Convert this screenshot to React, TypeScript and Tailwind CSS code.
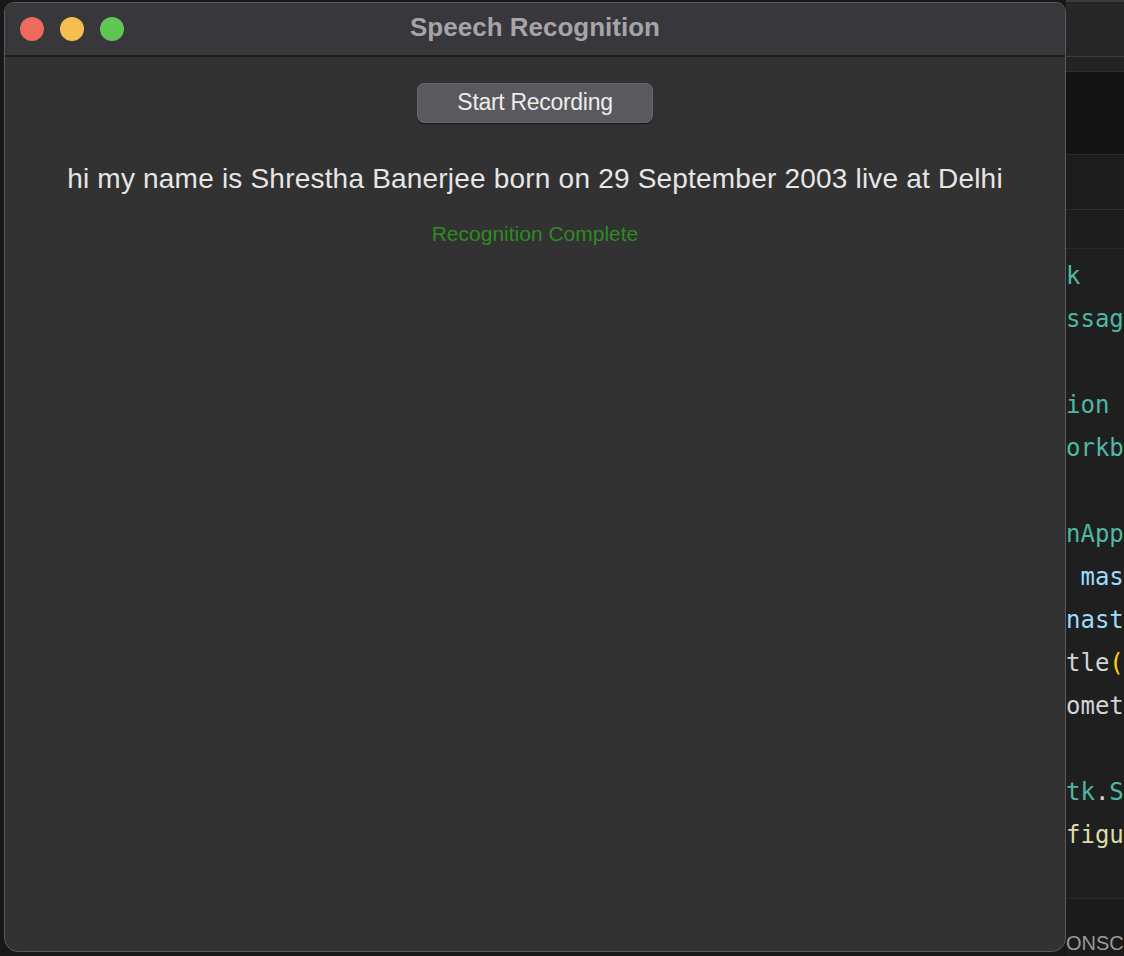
const codeLines: { parts: { text: string; color: string }[] }[] = [
  { parts: [{ text: "k", color: "text-[#4fb8a2]" }] },
  { parts: [{ text: "ssag", color: "text-[#4fb8a2]" }] },
  { parts: [] },
  { parts: [{ text: "ion", color: "text-[#4fb8a2]" }] },
  { parts: [{ text: "orkb", color: "text-[#4fb8a2]" }] },
  { parts: [] },
  { parts: [{ text: "nApp", color: "text-[#4fb8a2]" }] },
  { parts: [{ text: " mas", color: "text-[#9cdcfe]" }] },
  { parts: [{ text: "nast", color: "text-[#9cdcfe]" }] },
  {
    parts: [
      { text: "tle", color: "text-[#d4d4d4]" },
      { text: "(", color: "text-[#ffd700]" },
    ],
  },
  { parts: [{ text: "omet", color: "text-[#d4d4d4]" }] },
  { parts: [] },
  {
    parts: [
      { text: "tk", color: "text-[#4fb8a2]" },
      { text: ".", color: "text-[#d4d4d4]" },
      { text: "S", color: "text-[#4fb8a2]" },
    ],
  },
  { parts: [{ text: "figu", color: "text-[#dcdcaa]" }] },
]

function TrafficLights() {
  return (
    <div className="flex items-center gap-4">
      <span className="w-6 h-6 rounded-full bg-[#ec6a5e]"></span>
      <span className="w-6 h-6 rounded-full bg-[#f4bf4f]"></span>
      <span className="w-6 h-6 rounded-full bg-[#61c554]"></span>
    </div>
  )
}

/**
 * Editor strip that shows behind the app window on the right.
 */
function EditorStrip() {
  return (
    <div className="flex-1 flex flex-col overflow-hidden font-['DejaVu_Sans_Mono',monospace]">
      <div className="h-[2px] bg-[#3a3a3a]"></div>
      <div className="h-[55px] bg-[#262626] border-b border-[#3c3c3c]"></div>
      <div className="h-[15px] bg-[#232323] border-b border-[#2e2e2e]"></div>
      <div className="h-[83px] bg-[#141414] border-b border-[#2a2a2a]"></div>
      <div className="h-[55px] bg-[#1c1c1c] border-b border-[#2e2e2e]"></div>
      <div className="h-[39px] bg-[#1d1d1d] border-b border-[#2a2a2a]"></div>
      <div className="h-[650px] bg-[#1f1f1f] border-b border-[#2c2c2c] pt-[6px]">
        {codeLines.map((line, i) => (
          <div key={i} className="h-[43px] leading-[43px] text-[24px] whitespace-pre">
            {line.parts.map((p, j) => (
              <span key={j} className={p.color}>
                {p.text}
              </span>
            ))}
          </div>
        ))}
      </div>
      <div className="flex-1 bg-[#1b1b1b] pt-[32px]">
        <div className="text-[20px] leading-[24px] text-[#9a9a9a] font-['Liberation_Sans',Arial,sans-serif] whitespace-pre">
          ONSC
        </div>
      </div>
    </div>
  )
}

export default function App() {
  return (
    <div className="w-[1124px] h-[956px] bg-[#181818] flex overflow-hidden font-['Liberation_Sans',Arial,sans-serif]">
      {/* App window */}
      <div className="w-[1066px] shrink-0 pl-[4px] pt-[2px]">
        <div className="w-[1062px] h-[950px] flex flex-col rounded-t-[10px] rounded-b-[14px] border border-[#5a5a5a] bg-[#323232] overflow-hidden">
          {/* Title bar */}
          <div className="relative h-[54px] shrink-0 bg-[#38373c] border-b-2 border-[#1c1c1c] flex items-center pl-[15px]">
            <TrafficLights />
            <div className="absolute inset-0 flex items-center justify-center text-[26px] font-bold text-[#a5a4a9] pb-[3px]">
              Speech Recognition
            </div>
          </div>

          {/* Content */}
          <div className="flex flex-col items-center pt-[26px]">
            <button className="w-[236px] h-[40px] rounded-[7px] bg-[#5a595e] border border-[#69686d] shadow-[0_1px_1px_rgba(0,0,0,0.6)] text-[23px] tracking-[-0.3px] text-[#ececec] leading-none pb-[1px]">
              Start Recording
            </button>
            <p className="mt-[41px] text-[28px] tracking-[0.2px] leading-[30px] text-[#e6e6e6] whitespace-nowrap">
              hi my name is Shrestha Banerjee born on 29 September 2003 live at Delhi
            </p>
            <p className="mt-[28px] text-[21px] leading-[24px] text-[#2f8a22]">
              Recognition Complete
            </p>
          </div>
        </div>
      </div>

      <EditorStrip />
    </div>
  )
}
